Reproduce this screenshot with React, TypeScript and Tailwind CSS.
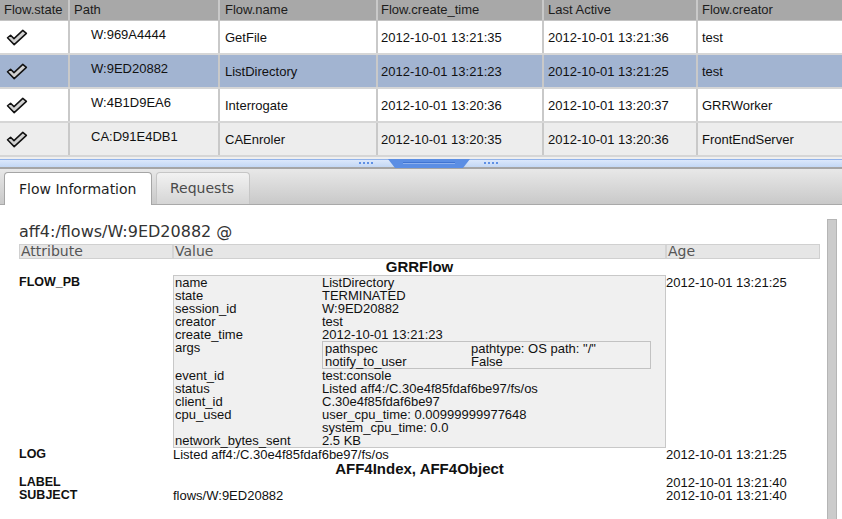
import React from "react";

const ARIAL = "font-['Liberation_Sans',Arial,Helvetica,sans-serif]";
const VERDANA = "font-['DejaVu_Sans',Verdana,sans-serif]";

const FLOWS = [
  { path: "W:969A4444", name: "GetFile", created: "2012-10-01 13:21:35", active: "2012-10-01 13:21:36", creator: "test" },
  { path: "W:9ED20882", name: "ListDirectory", created: "2012-10-01 13:21:23", active: "2012-10-01 13:21:25", creator: "test", sel: true },
  { path: "W:4B1D9EA6", name: "Interrogate", created: "2012-10-01 13:20:36", active: "2012-10-01 13:20:37", creator: "GRRWorker" },
  { path: "CA:D91E4DB1", name: "CAEnroler", created: "2012-10-01 13:20:35", active: "2012-10-01 13:20:36", creator: "FrontEndServer", alt: true },
];

const PB: [string, string | string[]][] = [
  ["name", "ListDirectory"],
  ["state", "TERMINATED"],
  ["session_id", "W:9ED20882"],
  ["creator", "test"],
  ["create_time", "2012-10-01 13:21:23"],
];

const PB2: [string, string | string[]][] = [
  ["event_id", "test:console"],
  ["status", "Listed aff4:/C.30e4f85fdaf6be97/fs/os"],
  ["client_id", "C.30e4f85fdaf6be97"],
  ["cpu_used", ["user_cpu_time: 0.00999999977648", "system_cpu_time: 0.0"]],
  ["network_bytes_sent", "2.5 KB"],
];

function Check() {
  return (
    <svg width="22" height="17" viewBox="0 0 22 17">
      <path d="M1.5 8.8 L4.6 6.2 L8 9.6 L16.8 1.4 L20.4 4.4 L8.2 15.6 Z" fill="#d2d2d2" stroke="#111" strokeWidth="1.5" strokeLinejoin="round" />
    </svg>
  );
}

function KV({ rows }: { rows: [string, string | string[]][] }) {
  return (
    <>
      {rows.map(([k, v]) => (
        <div key={k} className="flex">
          <div className="w-[148px] shrink-0 pl-[1px]">{k}</div>
          <div>{Array.isArray(v) ? v.map((l) => <div key={l}>{l}</div>) : v}</div>
        </div>
      ))}
    </>
  );
}

export default function App() {
  const sep = "border-r-2 border-[#c9c9c9]";
  return (
    <div className={`w-[842px] h-[519px] overflow-hidden bg-white ${ARIAL} text-[13px] text-[#111]`}>
      {/* flow list */}
      <div className="bg-[#ededed]">
        <div className="flex h-[21px] bg-[#a8a8a8] border-b border-[#c4c4c4] leading-[20px] text-[#1c1c1c]">
          <div className={`w-[70px] pl-[4px] ${sep}`}>Flow.state</div>
          <div className={`w-[150px] pl-[4px] ${sep}`}>Path</div>
          <div className={`w-[158px] pl-[5px] ${sep}`}>Flow.name</div>
          <div className={`w-[166px] pl-[3px] ${sep}`}>Flow.create_time</div>
          <div className={`w-[154px] pl-[4px] ${sep}`}>Last Active</div>
          <div className="flex-1 pl-[4px]">Flow.creator</div>
        </div>
        {FLOWS.map((f) => (
          <div
            key={f.path}
            className={`flex h-[34px] border-b-2 border-[#d6d6d6] items-center ${f.sel ? "bg-[#a2b4d1]" : f.alt ? "bg-[#ededed]" : "bg-white"}`}
          >
            <div className={`w-[70px] h-full pl-[6px] flex items-center ${sep}`}>
              <Check />
            </div>
            <div className={`w-[150px] h-full pl-[21px] pb-[5px] flex items-center ${sep}`}>{f.path}</div>
            <div className={`w-[158px] h-full pl-[5px] pt-[1px] flex items-center ${sep}`}>{f.name}</div>
            <div className={`w-[166px] h-full pl-[3px] pt-[1px] flex items-center ${sep}`}>{f.created}</div>
            <div className={`w-[154px] h-full pl-[4px] pt-[1px] flex items-center ${sep}`}>{f.active}</div>
            <div className="flex-1 h-full pl-[4px] pt-[1px] flex items-center">{f.creator}</div>
          </div>
        ))}
      </div>

      {/* splitter */}
      <div className="h-[2px] bg-[#efefef]" />
      <div className="relative h-[8px] border-t border-[#93b4ea] bg-gradient-to-b from-[#dbe8fb] to-[#c3d7f4]">
        <div className="absolute left-[359px] top-[2px] flex gap-[2px]">
          {[0, 1, 2, 3].map((i) => <div key={i} className="w-[2px] h-[2px] bg-[#5f90e4]" />)}
        </div>
        <svg className="absolute left-[388px] top-[-1px]" width="82" height="9" viewBox="0 0 82 9">
          <path d="M0 0 H82 L75 9 H7 Z" fill="#5b8ee4" />
          <path d="M15 3.5 H67" stroke="#3f74d2" strokeWidth="1" />
          <path d="M15 4.5 H67" stroke="#8db0ee" strokeWidth="1" />
        </svg>
        <div className="absolute left-[484px] top-[2px] flex gap-[2px]">
          {[0, 1, 2, 3].map((i) => <div key={i} className="w-[2px] h-[2px] bg-[#5f90e4]" />)}
        </div>
      </div>
      <div className="h-[2px] bg-[#a5a5a5]" />

      {/* tabs */}
      <div className={`flex items-end gap-[4px] h-[36px] pl-[4px] bg-gradient-to-b from-[#e8e8e8] to-[#c9c9c9] border-b border-[#a9a9a9] ${VERDANA} text-[14px]`}>
        <div className="w-[148px] h-[33px] -mb-px pl-[14px] flex items-center bg-white border border-b-0 border-[#a5a5a5] rounded-t-[4px] text-[#1e1e1e]">
          Flow Information
        </div>
        <div className="w-[94px] h-[32px] pl-[13px] flex items-center bg-gradient-to-b from-[#f2f2f2] to-[#d5d5d5] border border-b-0 border-[#c6c6c6] rounded-t-[4px] text-[#4a4a4a]">
          Requests
        </div>
      </div>

      {/* flow information */}
      <div className="flex">
        <div className="w-[827px] pl-[19px] pr-[7px]">
          <div className={`${VERDANA} text-[16px] leading-[20px] text-[#333] pt-[17px] pb-[2px]`}>aff4:/flows/W:9ED20882 @</div>
          <div className="grid grid-cols-[154px_493px_154px]">
            <div className={`${VERDANA} col-span-3 grid grid-cols-[154px_493px_154px] h-[15px] bg-[#e6e6e6] border border-[#d0d0d0] text-[14px] leading-[13px] text-[#555]`}>
              <div className="border-r-2 border-[#d4d4d4] pl-[1px]">Attribute</div>
              <div className="border-r-2 border-[#d4d4d4] pl-[1px]">Value</div>
              <div className="pl-[1px]">Age</div>
            </div>

            <div className="col-span-3 text-center font-bold text-[15px] leading-[16px]">GRRFlow</div>

            <div className="font-bold text-[12.5px] leading-[13px] pt-[1px]">FLOW_PB</div>
            <div className="leading-[13px] bg-[#f0f0f0] border border-[#c8c8c8]">
              <KV rows={PB} />
              <div className="flex">
                <div className="w-[148px] shrink-0 pl-[1px]">args</div>
                <div className="w-[329px] border border-[#c2c2c2]">
                  <div className="flex">
                    <div className="w-[148px] shrink-0 pl-[2px]">pathspec</div>
                    <div>pathtype: OS path: "/"</div>
                  </div>
                  <div className="flex">
                    <div className="w-[148px] shrink-0 pl-[2px]">notify_to_user</div>
                    <div>False</div>
                  </div>
                </div>
              </div>
              <KV rows={PB2} />
            </div>
            <div className="leading-[13px] pt-[1px]">2012-10-01 13:21:25</div>

            <div className="font-bold text-[12.5px] leading-[13px]">LOG</div>
            <div className="leading-[13px]">Listed aff4:/C.30e4f85fdaf6be97/fs/os</div>
            <div className="leading-[13px]">2012-10-01 13:21:25</div>

            <div className="col-span-3 text-center font-bold text-[15px] leading-[15px]">AFF4Index, AFF4Object</div>

            <div className="font-bold text-[12.5px] leading-[13px]">LABEL</div>
            <div className="leading-[13px]" />
            <div className="leading-[13px]">2012-10-01 13:21:40</div>

            <div className="font-bold text-[12.5px] leading-[13px]">SUBJECT</div>
            <div className="leading-[13px]">flows/W:9ED20882</div>
            <div className="leading-[13px]">2012-10-01 13:21:40</div>
          </div>
        </div>
        <div className="w-[10px] h-[320px] mt-[14px] bg-[#cbcbcb] border border-[#b5b5b5]" />
      </div>
    </div>
  );
}
